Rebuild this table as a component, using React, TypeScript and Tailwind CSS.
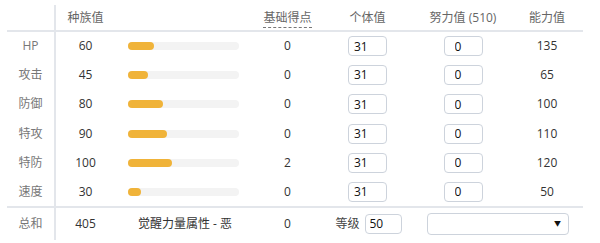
import React from 'react'

type Stat = { label: string; base: number; ev: number; iv: number; ep: number; value: number }

const stats: Stat[] = [
    { label: 'HP', base: 60, ev: 0, iv: 31, ep: 0, value: 135 },
    { label: '攻击', base: 45, ev: 0, iv: 31, ep: 0, value: 65 },
    { label: '防御', base: 80, ev: 0, iv: 31, ep: 0, value: 100 },
    { label: '特攻', base: 90, ev: 0, iv: 31, ep: 0, value: 110 },
    { label: '特防', base: 100, ev: 2, iv: 31, ep: 0, value: 120 },
    { label: '速度', base: 30, ev: 0, iv: 31, ep: 0, value: 50 },
]

const inputCls =
    'w-[39px] h-[20px] rounded-[4px] border border-[#cdd3dc] bg-white text-[12px] text-[#111] outline-none'

export default function App() {
    return (
        <div
            className="w-[600px] h-[243px] bg-white overflow-hidden pt-[5px] pl-[7px]"
            style={{ fontFamily: '"Open Sans", "Noto Sans CJK SC", sans-serif' }}
        >
            <table className="border-collapse table-fixed w-[576px] text-[12px] leading-none">
                <colgroup>
                    <col className="w-[48px]" />
                    <col className="w-[60px]" />
                    <col className="w-[140px]" />
                    <col className="w-[65px]" />
                    <col className="w-[95px]" />
                    <col className="w-[96px]" />
                    <col className="w-[72px]" />
                </colgroup>
                <thead>
                    <tr className="h-[26px] border-b-2 border-[#e3e6eb] text-[#666]">
                        <th className="border-r-2 border-[#e3e6eb]" />
                        <th className="font-normal text-center">种族值</th>
                        <th />
                        <th className="font-normal text-center">
                            <span className="border-b border-dashed border-[#777] pb-[1px]">基础得点</span>
                        </th>
                        <th className="font-normal text-center">个体值</th>
                        <th className="font-normal text-center">努力值 (510)</th>
                        <th className="font-normal text-center">能力值</th>
                    </tr>
                </thead>
                <tbody>
                    {stats.map((s, i) => (
                        <tr
                            key={s.label}
                            className={`h-[29.3px] ${i === stats.length - 1 ? 'border-b-2 border-[#e3e6eb]' : ''}`}
                        >
                            <td className="border-r-2 border-[#e3e6eb] text-center text-[#777]">{s.label}</td>
                            <td className="text-center text-[#333]">{s.base}</td>
                            <td className="pl-[13px] pr-[16px]">
                                <div className="h-[8px] w-[111px] rounded-full bg-[#f3f3f3]">
                                    <div
                                        className="h-[8px] rounded-full bg-[#f0b339]"
                                        style={{ width: `${(s.base / 255) * 111}px` }}
                                    />
                                </div>
                            </td>
                            <td className="text-center text-[#333]">{s.ev}</td>
                            <td className="text-center">
                                <input className={`${inputCls} pl-[5px]`} defaultValue={s.iv} />
                            </td>
                            <td className="text-center">
                                <input className={`${inputCls} pl-[10px]`} defaultValue={s.ep} />
                            </td>
                            <td className="text-center text-[#333]">{s.value}</td>
                        </tr>
                    ))}
                    <tr className="h-[33px]">
                        <td className="border-r-2 border-[#e3e6eb] text-center text-[#777]">总和</td>
                        <td className="text-center text-[#333]">405</td>
                        <td className="text-center text-[#333]">觉醒力量属性 - 恶</td>
                        <td className="text-center text-[#333]">0</td>
                        <td className="text-center">
                            <div className="flex items-center justify-center gap-[5px] pl-[2px]">
                                <span className="text-[#444]">等级</span>
                                <input
                                    className="w-[37px] h-[20px] rounded-[4px] border border-[#cdd3dc] bg-white px-[4px] text-[12px] text-[#111] outline-none"
                                    defaultValue={50}
                                />
                            </div>
                        </td>
                        <td colSpan={2} className="pl-[12px] pr-[14px]">
                            <div className="flex h-[22px] w-[142px] items-center justify-end rounded-[4px] border border-[#cdd3dc] bg-white pr-[7px]">
                                <span className="text-[7px] text-[#111]">▼</span>
                            </div>
                        </td>
                    </tr>
                </tbody>
            </table>
        </div>
    )
}
